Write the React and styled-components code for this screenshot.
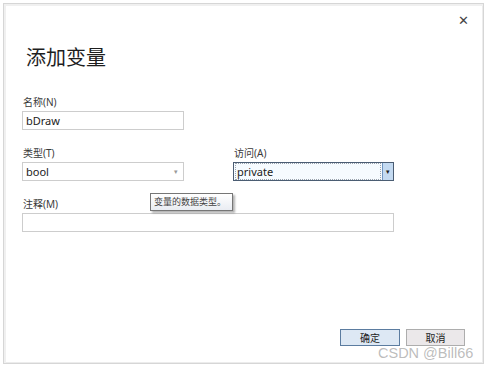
import React from 'react';
import styled, { createGlobalStyle } from 'styled-components';

const GlobalStyle = createGlobalStyle`
  html, body {
    margin: 0;
    padding: 0;
    background: #ffffff;
  }
  body {
    font-family: "Segoe UI", "Noto Sans", "Noto Sans CJK SC", sans-serif;
    color: #222;
  }
`;

const Page = styled.div`
  width: 489px;
  height: 369px;
  padding: 3px;
  box-sizing: border-box;
  position: relative;
  overflow: hidden;
`;

const Window = styled.div`
  position: relative;
  width: 481px;
  height: 361px;
  box-sizing: border-box;
  border: 1px solid #d6d6d6;
  box-shadow: inset 2px 2px 0 #f0f0f0, inset -1px -1px 0 #ececec;
  background: #fff;
  display: flex;
  flex-direction: column;
  padding: 0 18px 0 18px;
`;

const TopBar = styled.div`
  height: 30px;
  display: flex;
  justify-content: flex-end;
  align-items: flex-start;
`;

const Close = styled.span`
  margin-top: 10px;
  margin-right: -4px;
  font-size: 13px;
  line-height: 14px;
  color: #444;
  font-family: "DejaVu Sans", sans-serif;
`;

const Title = styled.h1`
  margin: 11px 0 0 4px;
  font-weight: 400;
  font-size: 20px;
  line-height: 24px;
  color: #1e1e1e;
  font-family: "Noto Sans CJK SC", sans-serif;
`;

const Form = styled.div`
  margin-top: 26px;
  display: grid;
  grid-template-columns: 162px 161px;
  column-gap: 49px;
  row-gap: 16px;
`;

const Field = styled.div`
  display: flex;
  flex-direction: column;
  align-items: flex-start;
  gap: 2px;
  grid-column: ${p => (p.$wide ? '1 / span 2' : 'auto')};
  position: relative;
`;

const Label = styled.label`
  font-size: 10px;
  line-height: 14px;
  color: #3a3a3a;
  padding-left: 1px;
  font-family: "Segoe UI", "Noto Sans", "Noto Sans CJK SC", sans-serif;
`;

const Box = styled.div`
  width: ${p => p.$w || '100%'};
  height: 19px;
  box-sizing: border-box;
  border: 1px solid ${p => (p.$focus ? '#4b5d73' : '#cdcdcd')};
  background: ${p => (p.$focus ? '#f6fbff' : '#fff')};
  display: flex;
  align-items: center;
  font-size: 11px;
  color: #222;
  padding-left: 2px;
  position: relative;
`;

const Value = styled.span`
  flex: 1;
  line-height: 15px;
  padding-left: 1px;
  ${p => p.$focus && 'outline: 1px dotted #9aa3ad; margin-right: 2px;'}
`;

const Caret = styled.span`
  width: 10px;
  align-self: stretch;
  display: flex;
  align-items: center;
  justify-content: center;
  font-size: 7px;
  color: ${p => (p.$focus ? '#222' : '#999')};
  background: ${p => (p.$focus ? '#c4daf1' : 'transparent')};
  border-left: ${p => (p.$focus ? '1px solid #6e95c2' : 'none')};
  margin-right: ${p => (p.$focus ? '0' : '2px')};
`;

const Tooltip = styled.div`
  position: absolute;
  left: 128px;
  top: -4px;
  height: 18px;
  box-sizing: border-box;
  border: 1px solid #767676;
  background: linear-gradient(#ffffff, #e9ecf2);
  box-shadow: 2px 2px 2px rgba(0, 0, 0, 0.3);
  font-size: 9px;
  line-height: 16px;
  padding: 0 6px 0 3px;
  color: #444;
  font-family: "Noto Sans CJK SC", sans-serif;
  white-space: nowrap;
  z-index: 2;
`;

const Footer = styled.div`
  margin-top: auto;
  margin-bottom: 17px;
  display: flex;
  justify-content: flex-end;
  gap: 6px;
`;

const Button = styled.button`
  width: ${p => (p.$primary ? '60px' : '59px')};
  height: 17px;
  box-sizing: border-box;
  padding: 0;
  border: 1px solid ${p => (p.$primary ? '#5b7ca0' : '#adadad')};
  background: ${p => (p.$primary ? '#dde8f4' : '#ebe8ea')};
  font-size: 10px;
  line-height: 15px;
  color: #222;
  font-family: "Noto Sans CJK SC", sans-serif;
`;

const Watermark = styled.div`
  position: absolute;
  left: 378px;
  top: 345px;
  font-family: "Liberation Sans", Arial, sans-serif;
  font-size: 14.5px;
  color: rgba(160, 160, 160, 0.7);
  text-shadow: 0 0 1px #fff;
  white-space: nowrap;
  z-index: 3;
`;

export default function App() {
  return (
    <Page>
      <GlobalStyle />
      <Window>
        <TopBar>
          <Close>✕</Close>
        </TopBar>
        <Title>添加变量</Title>
        <Form>
          <Field $wide>
            <Label>名称(N)</Label>
            <Box $w="162px">
              <Value>bDraw</Value>
            </Box>
          </Field>
          <Field>
            <Label>类型(T)</Label>
            <Box>
              <Value>bool</Value>
              <Caret>▾</Caret>
            </Box>
          </Field>
          <Field>
            <Label>访问(A)</Label>
            <Box $focus>
              <Value $focus>private</Value>
              <Caret $focus>▾</Caret>
            </Box>
          </Field>
          <Field $wide>
            <Label>注释(M)</Label>
            <Box />
            <Tooltip>变量的数据类型。</Tooltip>
          </Field>
        </Form>
        <Footer>
          <Button $primary>确定</Button>
          <Button>取消</Button>
        </Footer>
      </Window>
      <Watermark>CSDN @Bill66</Watermark>
    </Page>
  );
}
